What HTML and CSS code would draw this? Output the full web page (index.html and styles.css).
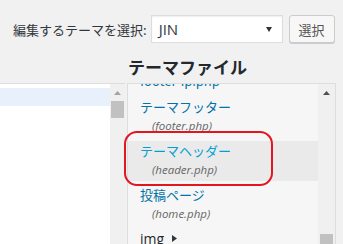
FILE: index.html
```html
<!DOCTYPE html>
<html lang="ja">
<head>
<meta charset="utf-8">
<title>テーマファイル</title>
<link rel="stylesheet" href="styles.css">
</head>
<body>
<div class="top">
  <label class="label">編集するテーマを選択:</label>
  <div class="select"><span class="select-text">JIN</span><svg class="select-arrow" width="6" height="5" viewBox="0 0 6 5"><polygon points="0,0 6,0 3,5" fill="#333"/></svg></div>
  <button class="btn">選択</button>
</div>
<div class="files">
  <div class="spacer"></div>
  <h2 class="heading">テーマファイル</h2>
  <div class="editor">
    <div class="code"><div class="current-line"></div></div>
    <div class="vscroll vscroll-left">
      <div class="arrow-box"><svg width="7" height="4" viewBox="0 0 7 4"><polygon points="0,4 7,4 3.5,0" fill="#a3a3a3"/></svg></div>
      <div class="thumb thumb-left"></div>
    </div>
  </div>
  <div class="tree">
    <div class="list">
      <ul class="items">
        <li class="first"><a class="item"><span class="name">footer-ip.php</span></a></li>
        <li><a class="item"><span class="name">テーマフッター</span><span class="file">(footer.php)</span></a></li>
        <li><a class="item item-active"><span class="name">テーマヘッダー</span><span class="file">(header.php)</span></a></li>
        <li><a class="item"><span class="name">投稿ページ</span><span class="file">(home.php)</span></a></li>
        <li><a class="item item-folder"><span class="name">img</span><svg class="folder-arrow" width="5" height="7" viewBox="0 0 5 7"><polygon points="0,0 5,3.5 0,7" fill="#32373c"/></svg></a></li>
      </ul>
    </div>
    <div class="vscroll vscroll-right">
      <div class="arrow-box"><svg width="7" height="4" viewBox="0 0 7 4"><polygon points="0,4 7,4 3.5,0" fill="#505050"/></svg></div>
      <div class="thumb thumb-right"></div>
    </div>
  </div>
</div>
<div class="mark"></div>
</body>
</html>
```
FILE: styles.css
```css
html, body {
  margin: 0;
  padding: 0;
}
body {
  background: #f1f1f1;
  width: 343px;
  height: 244px;
  overflow: hidden;
  position: relative;
  font-family: "Noto Sans CJK JP", "Open Sans", sans-serif;
  color: #23282d;
}
.top {
  display: flex;
  align-items: center;
  padding: 15px 0 0 13px;
  height: 28px;
}
.label {
  font-size: 13px;
  color: #32373c;
  margin-right: 4px;
  white-space: nowrap;
}
.select {
  box-sizing: border-box;
  width: 132px;
  height: 28px;
  background: #fff;
  border: 1px solid #ddd;
  box-shadow: inset 0 1px 2px rgba(0,0,0,0.07);
  display: flex;
  align-items: center;
  padding: 0 8px 0 7px;
}
.select-text {
  flex: 1;
  font-family: "Open Sans", sans-serif;
  font-size: 15px;
  color: #32373c;
}
.select-arrow {
  display: block;
  margin-right: 2px;
}
.btn {
  box-sizing: border-box;
  margin-left: 6px;
  width: 46px;
  height: 28px;
  padding: 0;
  background: #f7f7f7;
  border: 1px solid #ccc;
  border-radius: 3px;
  box-shadow: 0 1px 0 #ccc;
  font-family: "Noto Sans CJK JP", sans-serif;
  font-size: 13px;
  color: #555;
}
.files {
  display: grid;
  grid-template-columns: 125px 209px;
  grid-template-rows: auto 170px;
  column-gap: 2px;
}
.heading {
  grid-column: 2;
  grid-row: 1;
  margin: 12px 0 4px 1px;
  font-size: 17px;
  line-height: 24px;
  font-weight: bold;
  color: #23282d;
}
.spacer {
  grid-column: 1;
  grid-row: 1;
}
.editor {
  grid-column: 1;
  grid-row: 2;
  display: flex;
  border-top: 1px solid #ddd;
  background: #fff;
}
.code {
  flex: 1;
}
.current-line {
  margin-top: 4px;
  height: 18px;
  background: #e8f1fb;
}
.vscroll {
  background: #f0f0f0;
  display: flex;
  flex-direction: column;
}
.vscroll-left {
  width: 15px;
}
.vscroll-right {
  width: 17px;
}
.arrow-box {
  height: 17px;
  display: flex;
  align-items: center;
  justify-content: center;
}
.arrow-box svg {
  display: block;
}
.thumb {
  background: #c1c1c1;
}
.thumb-left {
  height: 17px;
  margin: 0 1px;
}
.thumb-right {
  height: 14px;
  margin: 133px 2px 0;
}
.tree {
  grid-column: 2;
  grid-row: 2;
  display: flex;
  border: 1px solid #ddd;
  background: #f6f6f6;
}
.list {
  flex: 1;
  overflow: hidden;
}
.items {
  list-style: none;
  margin: -13px 0 0;
  padding: 0;
}
.items li {
  margin: 0 0 4px;
}
.items li.first {
  margin-bottom: 7px;
}
.item {
  display: block;
  padding: 0 12px;
  text-decoration: none;
  cursor: pointer;
}
.name {
  display: block;
  font-size: 13px;
  line-height: 19px;
  color: #0073aa;
}
.file {
  display: block;
  padding: 0 0 2px 12px;
  font-family: "Open Sans", sans-serif;
  font-style: italic;
  font-size: 11.5px;
  line-height: 19px;
  color: #666;
}
.item-active {
  background: #eaeaea;
}
.item-active .name {
  color: #00a0d2;
}
.item-folder {
  display: flex;
  align-items: center;
}
.item-folder .name {
  color: #23282d;
  font-family: "Open Sans", sans-serif;
  font-size: 14px;
}
.folder-arrow {
  display: block;
  margin-left: 8px;
}
.mark {
  position: absolute;
  left: 124px;
  top: 131px;
  width: 149px;
  height: 55px;
  box-sizing: border-box;
  border: 2.5px solid #e3151f;
  border-radius: 13px;
}
```
